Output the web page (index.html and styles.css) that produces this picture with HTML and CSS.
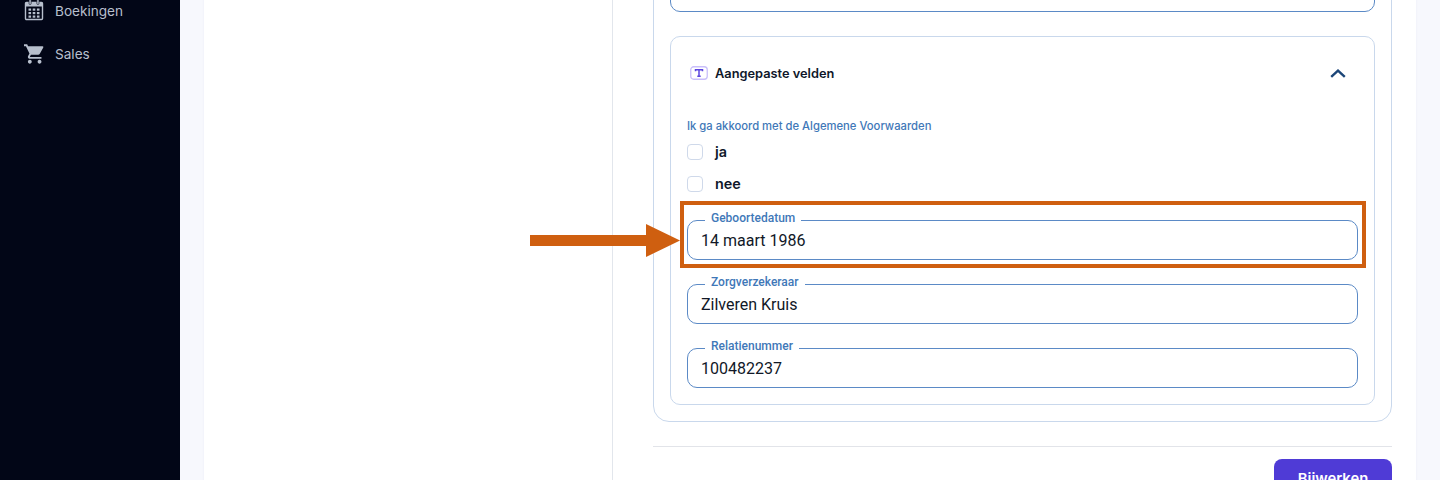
FILE: index.html
```html
<!DOCTYPE html>
<html lang="nl">
<head>
<meta charset="utf-8">
<title>Aangepaste velden</title>
<link rel="stylesheet" href="styles.css">
</head>
<body>
<div class="app">
  <aside class="sidebar">
    <nav class="nav">
      <a class="nav-item">
        <svg class="nav-icon" viewBox="0 0 20 22" fill="none">
          <rect x="1.5" y="3.5" width="17" height="17" rx="1" stroke="currentColor" stroke-width="1.4"/>
          <rect x="1.5" y="3.5" width="17" height="4" fill="currentColor"/>
          <rect x="5" y="0.5" width="2.2" height="5" rx="1" fill="currentColor" stroke="#020617" stroke-width=".6"/>
          <rect x="12.8" y="0.5" width="2.2" height="5" rx="1" fill="currentColor" stroke="#020617" stroke-width=".6"/>
          <g fill="currentColor">
            <rect x="4.5" y="9.5" width="2.6" height="2.2"/><rect x="8.7" y="9.5" width="2.6" height="2.2"/><rect x="12.9" y="9.5" width="2.6" height="2.2"/>
            <rect x="4.5" y="13" width="2.6" height="2.2"/><rect x="8.7" y="13" width="2.6" height="2.2"/><rect x="12.9" y="13" width="2.6" height="2.2"/>
            <rect x="4.5" y="16.5" width="2.6" height="2.2"/><rect x="8.7" y="16.5" width="2.6" height="2.2"/><rect x="12.9" y="16.5" width="2.6" height="2.2"/>
          </g>
        </svg>
        <span class="nav-text-low">Boekingen</span>
      </a>
      <a class="nav-item">
        <svg class="nav-icon" viewBox="1 2 20.6 20" fill="currentColor">
          <path d="M7 18c-1.1 0-1.99.9-1.99 2S5.9 22 7 22s2-.9 2-2-.9-2-2-2zM1 2v2h2l3.6 7.59-1.35 2.45c-.16.28-.25.61-.25.96 0 1.1.9 2 2 2h12v-2H7.42c-.14 0-.25-.11-.25-.25l.03-.12.9-1.83h7.45c.75 0 1.41-.41 1.75-1.03l3.58-6.49A1 1 0 0 0 20.01 4H5.21l-.94-2H1zm16 16c-1.1 0-1.99.9-1.99 2s.89 2 1.99 2 2-.9 2-2-.9-2-2-2z"/>
        </svg>
        <span>Sales</span>
      </a>
    </nav>
  </aside>
  <main class="main">
    <div class="card">
      <div class="col-left"></div>
      <div class="col-right">
        <section class="panel">
          <div class="field-cut"></div>
          <section class="custom">
            <header class="custom-head">
              <div class="custom-title">
                <svg class="t-icon" viewBox="0 0 18 14" fill="none">
                  <rect x=".75" y=".75" width="16.5" height="12.5" rx="3" stroke="#c9bffa" stroke-width="1.3"/>
                  <path d="M5.5 5.2V3.8h7v1.4M9 3.8v6.4M7.3 10.2h3.4" stroke="#5b45e0" stroke-width="1.5"/>
                </svg>
                <span>Aangepaste velden</span>
              </div>
              <svg class="chevron" viewBox="0 0 16 9" fill="none">
                <path d="M1.2 7.8 8 1.6l6.8 6.2" stroke="#1c4678" stroke-width="2.4"/>
              </svg>
            </header>
            <div class="group-label">Ik ga akkoord met de Algemene Voorwaarden</div>
            <label class="check"><span class="box"></span><span class="check-text">ja</span></label>
            <label class="check"><span class="box"></span><span class="check-text">nee</span></label>
            <div class="fields">
              <div class="field"><span class="field-label">Geboortedatum</span>14 maart 1986</div>
              <div class="field"><span class="field-label">Zorgverzekeraar</span>Zilveren Kruis</div>
              <div class="field"><span class="field-label">Relatienummer</span>100482237</div>
            </div>
          </section>
        </section>
        <footer class="actions">
          <button class="btn" type="button">Bijwerken</button>
        </footer>
      </div>
    </div>
  </main>
</div>
<div class="mark-box"></div>
<div class="mark-shaft"></div>
<div class="mark-head"></div>
</body>
</html>
```

FILE: styles.css
```css
* { box-sizing: border-box; }
html, body { margin: 0; height: 480px; overflow: hidden; }
body { font-family: Inter, "Liberation Sans", sans-serif; color: #0f172a; background: #f7f8fd; }

.app { display: flex; height: 480px; overflow: hidden; }

.sidebar { width: 180px; flex: none; background: #020617; color: #b7bfcd; }
.nav { display: flex; flex-direction: column; margin-top: -12px; padding-left: 24px; }
.nav-item { display: flex; align-items: center; gap: 11px; height: 44px; font-size: 13.6px; }
.nav-icon { width: 20px; height: 22px; flex: none; }
.nav-text-low { margin-top: 2px; }

.main { flex: 1; padding: 0 24px; min-width: 0; }
.card { display: flex; height: 560px; margin-top: -61px; background: #fff; box-shadow: 0 0 2px rgba(100, 116, 160, .08); }
.col-left { width: 409px; flex: none; border-right: 1px solid #e2e6ec; }
.col-right { flex: 1; padding: 0 24px 0 40px; min-width: 0; }

.panel { border: 1px solid #c9d8ec; border-radius: 16px; padding: 32px 16px 16px; }
.field-cut { height: 40px; border: 1px solid #5b8ac6; border-radius: 10px; }
.custom { margin-top: 24px; border: 1px solid #c9d8ec; border-radius: 10px; padding: 0 16px 16px; }
.custom-head { display: flex; align-items: center; justify-content: space-between; height: 72px; padding: 0 12px 0 3px; }
.custom-title { display: flex; align-items: center; gap: 7px; font-size: 12.8px; font-weight: 600; }
.t-icon { width: 18px; height: 14px; flex: none; }
.chevron { width: 16px; height: 9px; flex: none; }

.group-label { margin-top: 10px; font-size: 11.25px; line-height: 14px; font-weight: 500; color: #3f78b8; }
.check { display: flex; align-items: center; gap: 12px; height: 32px; font-size: 14.4px; font-weight: 600; color: #0f172a; }
.box { width: 16px; height: 16px; border: 1px solid #cfd9ea; border-radius: 4px; background: #fff; }
.check-text { margin-top: -2px; }
.check:first-of-type { margin-top: 3px; }

.fields { display: flex; flex-direction: column; gap: 24px; margin-top: 20px; }
.field { position: relative; display: flex; align-items: center; height: 40px; padding: 0 13px; border: 1px solid #5b8ac6; border-radius: 10px; font-family: Roboto, "Liberation Sans", sans-serif; font-size: 16px; color: #111827; }
.field-label { position: absolute; left: 17px; top: -10px; padding: 0 6px; background: #fff; font-size: 12px; line-height: 14px; font-weight: 500; color: #3f78b8; }

.actions { display: flex; justify-content: flex-end; margin-top: 24px; padding-top: 12px; border-top: 1px solid #e2e4e9; }
.btn { width: 118px; height: 40px; border: 0; border-radius: 8px; background: #4f3bd6; color: #fff; font: 600 14.8px Inter, "Liberation Sans", sans-serif; }

.mark-box { position: absolute; left: 680px; top: 201px; width: 686px; height: 67px; border: 4px solid #cf5f10; }
.mark-shaft { position: absolute; left: 530px; top: 235px; width: 116px; height: 11px; background: #cf5f10; }
.mark-head { position: absolute; left: 646px; top: 224px; width: 34px; height: 33px; background: #cf5f10; clip-path: polygon(0 0, 100% 50%, 0 100%); }
```
